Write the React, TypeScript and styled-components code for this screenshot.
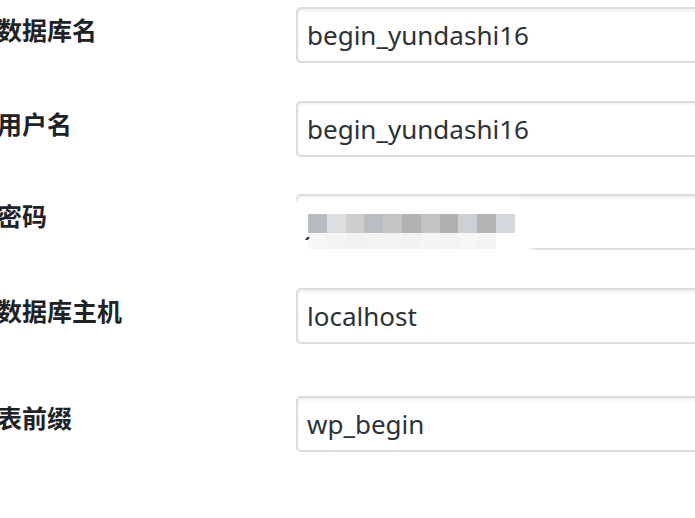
import React from 'react';
import styled, { createGlobalStyle } from 'styled-components';

const GlobalStyle = createGlobalStyle`
  html, body {
    margin: 0;
    padding: 0;
    background: #ffffff;
    overflow: hidden;
  }
`;

const Form = styled.div`
  display: flex;
  flex-direction: column;
  padding-top: 7px;
  width: 900px;
`;

const Row = styled.div<{ $gap: number }>`
  display: flex;
  align-items: flex-start;
  margin-bottom: ${(p) => p.$gap}px;
`;

const Label = styled.div<{ $offset: number }>`
  width: 299px;
  margin-left: -3px;
  padding-top: ${(p) => p.$offset}px;
  font-family: "Noto Sans CJK SC", "Noto Sans", sans-serif;
  font-size: 25px;
  line-height: 25px;
  font-weight: 700;
  color: #1d2327;
`;

const Field = styled.div`
  position: relative;
`;

const Input = styled.input`
  box-sizing: border-box;
  width: 520px;
  height: 56px;
  padding: 0 9px;
  border: 2px solid #dcdcde;
  border-radius: 5px;
  box-shadow: inset 0 2px 3px rgba(0, 0, 0, 0.06);
  background: #ffffff;
  font-family: "Noto Sans", "Open Sans", sans-serif;
  font-size: 26px;
  color: #2c3338;
  outline: none;
`;

const Blur = styled.div`
  position: absolute;
  left: -6px;
  top: 9px;
  width: 252px;
  height: 48px;
  background: #ffffff;
  border-radius: 4px 24px 24px 4px;
  box-shadow: 0 0 4px 3px #ffffff;
`;

const TileRow = styled.div<{ $top: number; $height: number }>`
  position: absolute;
  left: 18px;
  top: ${(p) => p.$top}px;
  display: flex;
`;

const Tile = styled.div<{ $height: number }>`
  width: 18.8px;
  height: ${(p) => p.$height}px;
`;

const Mark = styled.div`
  position: absolute;
  left: 10px;
  top: 43px;
  width: 3px;
  height: 3px;
  background: #3a3f48;
  transform: skewX(-30deg);
`;

const tileColors = [
  '#b9bcc0', '#dcdee0', '#cfcecc', '#babdc1', '#c4c5c7', '#b2b2b2',
  '#c1c2c4', '#b0b0b0', '#cdd1d5', '#b4b3b2', '#d4d8dc',
];

const lowColors = [
  '#f7f7f7', '#f3f4f4', '#f1f2f2', '#f2f3f3', '#f4f4f4', '#f2f2f2',
  '#f4f5f5', '#f3f3f3', '#f5f6f6', '#f4f4f4',
];

const fields = [
  { label: '数据库名', value: 'begin_yundashi16', gap: 38, offset: 10 },
  { label: '用户名', value: 'begin_yundashi16', gap: 37, offset: 10 },
  { label: '密码', value: '', gap: 38, offset: 9, hidden: true },
  { label: '数据库主机', value: 'localhost', gap: 52, offset: 10 },
  { label: '表前缀', value: 'wp_begin', gap: 0, offset: 9 },
];

const Mosaic: React.FC = () => (
  <Blur>
    <TileRow $top={11} $height={19}>
      {tileColors.map((c, i) => (
        <Tile key={i} $height={19} style={{ background: c }} />
      ))}
    </TileRow>
    <TileRow $top={30} $height={16}>
      {lowColors.map((c, i) => (
        <Tile key={i} $height={16} style={{ background: c }} />
      ))}
    </TileRow>
  </Blur>
);

const App: React.FC = () => {
  return (
    <>
      <GlobalStyle />
      <Form>
        {fields.map((f) => (
          <Row key={f.label} $gap={f.gap}>
            <Label $offset={f.offset}>{f.label}</Label>
            <Field>
              <Input type="text" defaultValue={f.value} readOnly />
              {f.hidden && (
                <>
                  <Mosaic />
                  <Mark />
                </>
              )}
            </Field>
          </Row>
        ))}
      </Form>
    </>
  );
};

export default App;
